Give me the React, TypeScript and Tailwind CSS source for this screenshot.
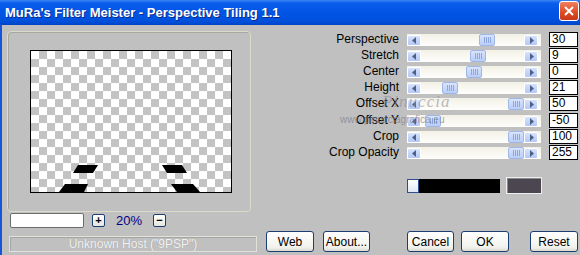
import React from "react";

type Row = { label: string; value: string; thumb: number; h: string };

const rows: Row[] = [
  { label: "Perspective", value: "30", thumb: 72, h: "h-[16px]" },
  { label: "Stretch", value: "9", thumb: 63, h: "h-[16px]" },
  { label: "Center", value: "0", thumb: 59, h: "h-[16px]" },
  { label: "Height", value: "21", thumb: 35, h: "h-[16px]" },
  { label: "Offset X", value: "50", thumb: 101, h: "h-[17px]" },
  { label: "Offset Y", value: "-50", thumb: 18, h: "h-[16px]" },
  { label: "Crop", value: "100", thumb: 101, h: "h-[16px]" },
  { label: "Crop Opacity", value: "255", thumb: 101, h: "h-[16px]" },
];

const font = "font-['Liberation_Sans',Arial,sans-serif]";

function Arrow({ dir }: { dir: "l" | "r" }) {
  return (
    <div className="w-[14px] h-[11px] rounded-[2px] bg-[linear-gradient(#d6e2fd,#b4c8f6)] border border-white flex items-center justify-center">
      <svg width="5" height="7" viewBox="0 0 5 7">
        {dir === "l" ? <path d="M4 0 L0 3.5 L4 7 Z" fill="#4d6185" /> : <path d="M1 0 L5 3.5 L1 7 Z" fill="#4d6185" />}
      </svg>
    </div>
  );
}

function Slider({ thumb }: { thumb: number }) {
  return (
    <div className="relative w-[134px] h-[12px] bg-[linear-gradient(#f3f1e6,#fefefb)] flex items-center justify-between pr-[3px]">
      <Arrow dir="l" />
      <Arrow dir="r" />
      <div
        className="absolute top-0 h-[12px] w-[16px] rounded-[2px] bg-[linear-gradient(#d9e4fd,#b9cdf7)] border border-[#9fb6e9] flex items-center justify-center gap-[1px]"
        style={{ left: thumb }}
      >
        {[0, 1, 2, 3].map((i) => (
          <div key={i} className="w-[1px] h-[6px] bg-[#f4f8ff] border-r border-[#8da6dd]" />
        ))}
      </div>
    </div>
  );
}

function Btn({ label, w }: { label: string; w: string }) {
  return (
    <button
      className={`${w} h-[21px] rounded-[3px] border border-[#1c3f73] bg-[linear-gradient(#ffffff,#f2f2ed_80%,#dcdad0)] text-[12px] text-black ${font} flex items-center justify-center`}
    >
      {label}
    </button>
  );
}

function Preview() {
  return (
    <div className="w-[244px] h-[181px] rounded-[4px] border border-[#dcdac8] shadow-[inset_1px_1px_0_#a8a8a0] pt-[18px] pl-[22px]">
      <div className="relative w-[202px] h-[143px] border border-black bg-[conic-gradient(#c3c3c3_25%,#ffffff_0_50%,#c3c3c3_0_75%,#ffffff_0)] bg-[length:16px_16px]">
        <svg className="absolute inset-0" width="200" height="141" viewBox="0 0 200 141">
          <path d="M47 114 L67 114 L62 122 L42 122 Z" fill="#000" />
          <path d="M34 133 L57 133 L53 141 L28 141 Z" fill="#000" />
          <path d="M131 114 L151 114 L156 122 L136 122 Z" fill="#000" />
          <path d="M140 133 L162 133 L169 141 L146 141 Z" fill="#000" />
        </svg>
      </div>
    </div>
  );
}

export default function App() {
  return (
    <div className={`relative w-[580px] h-[255px] overflow-hidden bg-[#c0c0c0] flex flex-col ${font}`}>
      {/* title bar */}
      <div className="h-[25px] shrink-0 flex items-center justify-between bg-[linear-gradient(#3a86f6,#0a5cec_12%,#0055e5_50%,#0050dc_85%,#0043c6)]">
        <span className="pl-[5px] text-white font-bold text-[13px] [text-shadow:1px_1px_0_#0b2a8a]">
          MuRa's Filter Meister - Perspective Tiling 1.1
        </span>
        <div className="mr-[1px] mb-[3px] w-[20px] h-[20px] rounded-[3px] border border-white bg-[linear-gradient(#f08060,#dd4a22_60%,#c8391a)] flex items-center justify-center">
          <svg width="10" height="10" viewBox="0 0 10 10">
            <path d="M1 1 L9 9 M9 1 L1 9" stroke="#fff" strokeWidth="2" />
          </svg>
        </div>
      </div>

      {/* body */}
      <div className="flex-1 flex flex-col border-l-2 border-[#1654d8]">
        <div className="flex">
          {/* left column */}
          <div className="w-[256px] pl-[5px] pt-[6px] flex flex-col">
            <Preview />
            <div className="flex items-center mt-[1px] pl-[3px] h-[15px]">
              <div className="w-[74px] h-[15px] bg-white border border-[#6d6d6d] rounded-[2px]" />
              <div className="ml-[8px] w-[13px] h-[13px] rounded-[2px] border border-[#1c3f73] bg-[linear-gradient(#fff,#e6e6df)] flex items-center justify-center text-[11px] font-bold leading-none text-black">
                +
              </div>
              <span className="w-[48px] text-center text-[13px] text-[#000080] leading-none">20%</span>
              <div className="w-[13px] h-[13px] rounded-[2px] border border-[#1c3f73] bg-[linear-gradient(#fff,#e6e6df)] flex items-center justify-center text-[11px] font-bold leading-none text-black">
                −
              </div>
            </div>
          </div>

          {/* right column */}
          <div className="flex-1 pt-[7px] flex flex-col">
            {rows.map((r) => (
              <div key={r.label} className={`${r.h} flex items-start`}>
                <span className="w-[141px] text-right text-[12px] leading-[14px] text-black">{r.label}</span>
                <div className="ml-[8px] mt-[2px]">
                  <Slider thumb={r.thumb} />
                </div>
                <div className="ml-[8px] w-[29px] h-[15px] bg-white border border-black text-[12px] leading-[13px] pl-[2px] text-black">
                  {r.value}
                </div>
              </div>
            ))}
            <div className="flex items-center mt-[16px] pl-[149px]">
              <div className="w-[12px] h-[14px] bg-[linear-gradient(#ffffff,#dfe6f5)] border border-[#2e4f8f]" />
              <div className="w-[81px] h-[14px] bg-black" />
              <div className="ml-[6px] w-[36px] h-[17px] bg-[#4b4650] border border-[#eeeeee] shadow-[inset_1px_1px_0_#8a8a8a]" />
            </div>
          </div>
        </div>

        {/* bottom row */}
        <div className="flex items-end mt-[3px] h-[21px]">
          <div className="ml-[7px] w-[248px] h-[16px] border border-[#e2e2d8] shadow-[inset_1px_1px_0_#a5a5a5] flex items-center justify-center text-[12px] text-[#f2f2f2] [text-shadow:0_0_1px_#9a9a9a]">
            Unknown Host ("9PSP")
          </div>
          <div className="ml-[9px]">
            <Btn label="Web" w="w-[48px]" />
          </div>
          <div className="ml-[9px]">
            <Btn label="About..." w="w-[47px]" />
          </div>
          <div className="ml-[37px]">
            <Btn label="Cancel" w="w-[47px]" />
          </div>
          <div className="ml-[7px]">
            <Btn label="OK" w="w-[48px]" />
          </div>
          <div className="ml-[21px]">
            <Btn label="Reset" w="w-[48px]" />
          </div>
        </div>
      </div>

      {/* watermark */}
      <span className="absolute left-[382px] top-[89px] text-[17px] tracking-[1px] text-[#8c8c9c]/60 font-['Liberation_Serif',serif] italic pointer-events-none">
        Pinuccia
      </span>
      <span className="absolute left-[340px] top-[112px] text-[10px] text-[#7c7c8c]/70 pointer-events-none">
        www.pinucciagrafica.eu
      </span>
    </div>
  );
}
